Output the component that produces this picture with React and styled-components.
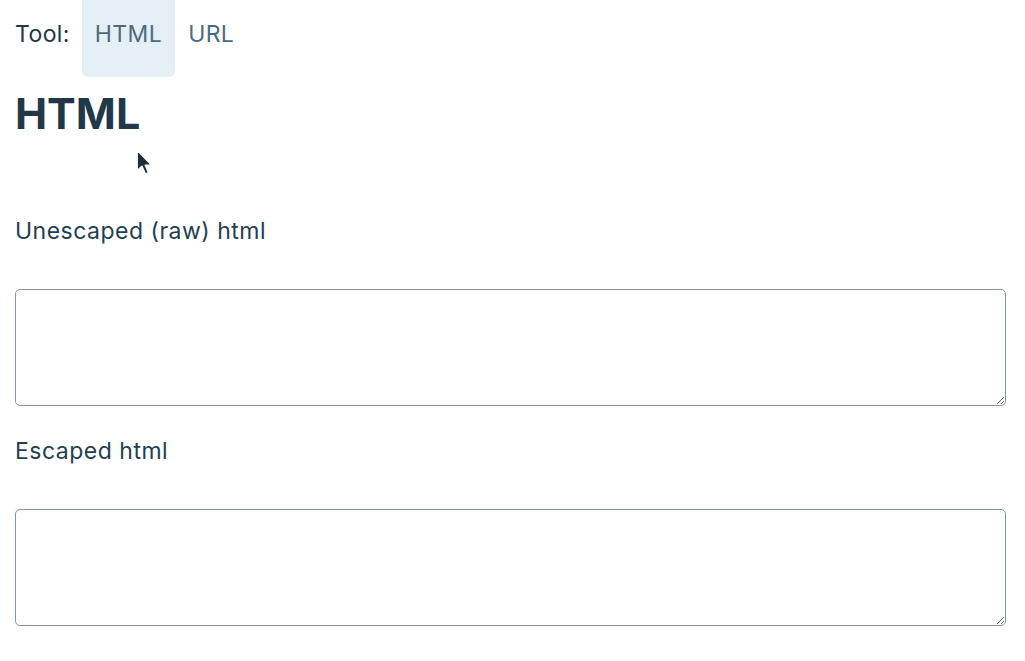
import styled, { createGlobalStyle } from 'styled-components'

const GlobalStyle = createGlobalStyle`
    html, body {
        margin: 0;
        padding: 0;
        background: #ffffff;
    }

    body {
        font-family: Inter, "Liberation Sans", sans-serif;
        color: #233847;
    }
`

const Page = styled.div`
    position: relative;
    padding: 0 19px 0 15px;
`

const Nav = styled.nav`
    display: flex;
    align-items: stretch;
    height: 77px;
`

const NavLabel = styled.span`
    display: flex;
    align-items: center;
    padding: 0 12px 9px 0;

    font-size: 23px;
    letter-spacing: 0.4px;
    color: #233847;
`

const Tab = styled.a`
    display: flex;
    align-items: center;

    border-radius: 0 0 6px 6px;
    padding: 0 13px 9px;
    background-color: ${({ $active }) => ($active ? '#e5eff6' : 'transparent')};

    font-size: 23px;
    letter-spacing: 0.4px;
    color: #4d6b80;
    text-decoration: none;
`

const Title = styled.h1`
    margin: 10px 0 0;

    font-size: 43px;
    font-weight: 700;
    line-height: 52px;
    color: #233847;
`

const Field = styled.div`
    display: flex;
    flex-direction: column;
`

const Label = styled.label`
    display: block;
    margin: ${({ $first }) => ($first ? '78px' : '31px')} 0 44px;

    font-size: 23px;
    letter-spacing: 0.5px;
    line-height: 28px;
    color: #233f50;
`

const TextArea = styled.textarea`
    display: block;
    box-sizing: border-box;

    width: 100%;
    height: 117px;
    margin: 0;
    border: 1px solid #7f97a8;
    border-radius: 5px;
    padding: 8px;

    background: #ffffff;
    font-family: inherit;
    font-size: 16px;
`

const Cursor = styled.svg`
    position: absolute;
    top: 149px;
    left: 136px;
`

export default function App() {
    return (
        <>
            <GlobalStyle />
            <Page>
                <Nav>
                    <NavLabel>Tool:</NavLabel>
                    <Tab href="#" $active>HTML</Tab>
                    <Tab href="#">URL</Tab>
                </Nav>
                <Title>HTML</Title>
                <Field>
                    <Label $first>Unescaped (raw) html</Label>
                    <TextArea />
                </Field>
                <Field>
                    <Label>Escaped html</Label>
                    <TextArea />
                </Field>
                <Cursor width="19" height="31" viewBox="0 0 16 26">
                    <path
                        d="M1 1 L1 18 L5 14.5 L8 21 L10.5 20 L7.8 13.6 L13 13.4 Z"
                        fill="#1f2d38"
                        stroke="#ffffff"
                        strokeWidth="1.2"
                        strokeLinejoin="round"
                    />
                </Cursor>
            </Page>
        </>
    )
}
